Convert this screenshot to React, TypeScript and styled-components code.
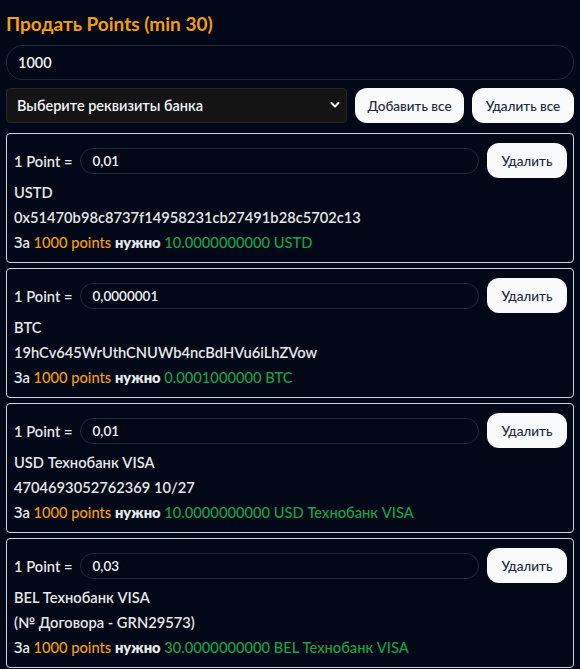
import styled, { createGlobalStyle } from "styled-components";

const GlobalStyle = createGlobalStyle`
  html, body {
    margin: 0;
    padding: 0;
    background: #020817;
  }
  body {
    font-family: "Lato", "Noto Sans", sans-serif;
    color: #e5e7eb;
  }
  * { box-sizing: border-box; }
`;

const Page = styled.div`
  padding: 12px 6px 0;
  display: flex;
  flex-direction: column;
`;

const Title = styled.h2`
  margin: 0 0 9px;
  font-size: 19px;
  line-height: 24px;
  font-weight: 700;
  color: #f59e0b;
`;

const AmountInput = styled.input`
  height: 35px;
  width: 100%;
  border: 1px solid #1e293b;
  border-radius: 17px;
  background: transparent;
  color: #f1f5f9;
  font: 600 14.5px "Lato", sans-serif;
  padding: 0 11px;
  outline: none;
`;

const Toolbar = styled.div`
  display: flex;
  gap: 8px;
  margin-top: 8px;
`;

const SelectWrap = styled.div`
  position: relative;
  flex: 1;
`;

const BankSelect = styled.select`
  appearance: none;
  width: 100%;
  height: 35px;
  background: #141414;
  border: 1px solid #27272a;
  border-radius: 4px;
  color: #f1f5f9;
  font: 600 14.5px "Lato", sans-serif;
  padding: 0 30px 0 10px;
  outline: none;
`;

const Chevron = styled.svg`
  position: absolute;
  right: 7px;
  top: 13px;
  pointer-events: none;
`;

const LightButton = styled.button<{ $w: number }>`
  width: ${(p) => p.$w}px;
  height: 35px;
  border: none;
  border-radius: 12px;
  background: #f8fafc;
  color: #1e293b;
  font: 500 13.5px "Lato", sans-serif;
  cursor: pointer;
  flex-shrink: 0;
`;

const List = styled.div`
  display: flex;
  flex-direction: column;
  gap: 5px;
  margin-top: 10px;
`;

const Card = styled.div`
  border: 1px solid #cbd5e1;
  border-radius: 4px;
  padding: 9px 6px 7px 7px;
`;

const RateRow = styled.div`
  display: flex;
  align-items: center;
  gap: 8px;
  margin-bottom: 2px;
`;

const RateLabel = styled.span`
  font-size: 14.7px;
  font-weight: 600;
  white-space: nowrap;
`;

const RateInput = styled.input`
  flex: 1;
  height: 26px;
  min-width: 0;
  border: 1px solid #1e293b;
  border-radius: 13px;
  background: transparent;
  color: #f1f5f9;
  font: 600 13.5px "Lato", sans-serif;
  padding: 0 11px;
  outline: none;
`;

const Line = styled.div`
  font-size: 14.7px;
  font-weight: 600;
  line-height: 25px;
  white-space: nowrap;
`;

const Orange = styled.span`
  color: #f59e0b;
  font-weight: 500;
`;

const Strong = styled.span`
  font-weight: 800;
`;

const Green = styled.span`
  color: #16a34a;
  font-weight: 500;
`;

type Req = { rate: string; name: string; detail: string; amount: string };

const items: Req[] = [
  {
    rate: "0,01",
    name: "USTD",
    detail: "0x51470b98c8737f14958231cb27491b28c5702c13",
    amount: "10.0000000000 USTD",
  },
  {
    rate: "0,0000001",
    name: "BTC",
    detail: "19hCv645WrUthCNUWb4ncBdHVu6iLhZVow",
    amount: "0.0001000000 BTC",
  },
  {
    rate: "0,01",
    name: "USD Технобанк VISA",
    detail: "4704693052762369 10/27",
    amount: "10.0000000000 USD Технобанк VISA",
  },
  {
    rate: "0,03",
    name: "BEL Технобанк VISA",
    detail: "(№ Договора - GRN29573)",
    amount: "30.0000000000 BEL Технобанк VISA",
  },
];

export default function App() {
  return (
    <>
      <GlobalStyle />
      <Page>
        <Title>Продать Points (min 30)</Title>
        <AmountInput defaultValue="1000" />
        <Toolbar>
          <SelectWrap>
            <BankSelect defaultValue="">
              <option value="">Выберите реквизиты банка</option>
            </BankSelect>
            <Chevron width="10" height="8" viewBox="0 0 10 8">
              <path d="M1.5 2 L5 5.5 L8.5 2" fill="none" stroke="#f1f5f9" strokeWidth="2" strokeLinecap="round" strokeLinejoin="round" />
            </Chevron>
          </SelectWrap>
          <LightButton $w={109}>Добавить все</LightButton>
          <LightButton $w={102}>Удалить все</LightButton>
        </Toolbar>
        <List>
          {items.map((it, i) => (
            <Card key={i}>
              <RateRow>
                <RateLabel>1 Point =</RateLabel>
                <RateInput defaultValue={it.rate} />
                <LightButton $w={80}>Удалить</LightButton>
              </RateRow>
              <Line>{it.name}</Line>
              <Line>{it.detail}</Line>
              <Line>
                За <Orange>1000 points</Orange> <Strong>нужно</Strong> <Green>{it.amount}</Green>
              </Line>
            </Card>
          ))}
        </List>
      </Page>
    </>
  );
}
